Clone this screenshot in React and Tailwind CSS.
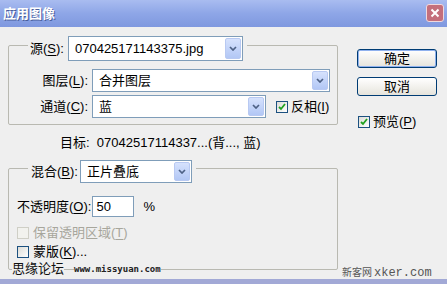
import React from "react";

const ui = "font-['Liberation_Sans','Noto_Sans_CJK_SC',sans-serif]";

function DropArrow() {
  return (
    <span className="flex h-full w-[16px] shrink-0 items-center justify-center rounded-[2px] border border-[#b8c9f2] bg-gradient-to-b from-[#d6e2fd] to-[#b2c7f5]">
      <svg width="8" height="5" viewBox="0 0 8 5">
        <path d="M1 1l3 3 3-3" stroke="#4d6185" strokeWidth="1.7" fill="none" />
      </svg>
    </span>
  );
}

function Select({ value, className }) {
  return (
    <div className={`flex items-stretch border border-[#7f9db9] bg-white p-[1px] ${className}`}>
      <span className="flex flex-1 items-center pl-[5px] text-[13px] text-black">{value}</span>
      <DropArrow />
    </div>
  );
}

function Check({ checked, disabled }) {
  return (
    <span
      className={`flex h-[12px] w-[12px] shrink-0 items-center justify-center border ${
        disabled ? "border-[#cfcfc6] bg-[#f2f2ee]" : "border-[#1c5180] bg-gradient-to-br from-[#dcdcd7] to-white"
      }`}
    >
      {checked && (
        <svg width="8" height="8" viewBox="0 0 8 8">
          <path d="M1 4l2 2 4-5" stroke="#21a121" strokeWidth="1.8" fill="none" />
        </svg>
      )}
    </span>
  );
}

function Key({ k }) {
  return <span className="underline underline-offset-2">{k}</span>;
}

function Button({ children, primary }) {
  return (
    <div
      className={`flex h-[19px] w-[80px] items-center justify-center rounded-[3px] border border-[#003c74] bg-gradient-to-b from-white to-[#e6e4dc] text-[13px] text-black ${
        primary ? "shadow-[inset_0_0_0_1px_#8fb1ee]" : ""
      }`}
    >
      {children}
    </div>
  );
}

export default function App() {
  return (
    <div className={`flex h-[284px] w-[447px] flex-col overflow-hidden bg-[#efefef] ${ui}`}>
      <div className="flex h-[27px] shrink-0 items-center justify-between bg-gradient-to-b from-[#a9bcf0] via-[#8ea6e7] to-[#7f98df] pl-[3px] pr-[3px]">
        <span className="text-[13px] font-bold text-white [text-shadow:1px_1px_0_#4a5f9c]">应用图像</span>
        <span className="mb-[2px] flex h-[18px] w-[18px] items-center justify-center rounded-[3px] border border-[#f0d8dc] bg-[#c46f7c]">
          <svg width="10" height="10" viewBox="0 0 10 10">
            <path d="M1.5 1.5l7 7M8.5 1.5l-7 7" stroke="white" strokeWidth="2" />
          </svg>
        </span>
      </div>

      <div className="relative flex flex-1 pl-[8px]">
        <div className="flex w-[330px] flex-col">
          <div className="mt-[18px] h-[80px] rounded-[2px] border border-[#b9b9b1]">
            <div className="-mt-[10px] ml-[19px] flex w-fit items-center bg-[#efefef] pl-[2px] pr-[4px]">
              <span className="text-[13px]">源(<Key k="S" />):</span>
              <Select value="070425171143375.jpg" className="ml-[4px] h-[25px] w-[175px]" />
            </div>
            <div className="mt-[8px] flex items-center">
              <span className="w-[79px] text-right text-[13px]">图层(<Key k="L" />):</span>
              <Select value="合并图层" className="ml-[4px] h-[23px] w-[238px]" />
            </div>
            <div className="mt-[3px] flex items-center">
              <span className="w-[79px] text-right text-[13px]">通道(<Key k="C" />):</span>
              <Select value="蓝" className="ml-[4px] h-[23px] w-[174px]" />
              <span className="ml-[10px]"><Check checked /></span>
              <span className="ml-[3px] text-[13px]">反相(<Key k="I" />)</span>
            </div>
          </div>

          <div className="mt-[10px] pl-[52px] text-[13px] leading-[16px]">
            目标:&nbsp; 07042517114337...(背..., 蓝)
          </div>

          <div className="mt-[17px] h-[102px] rounded-[2px] border border-[#b9b9b1]">
            <div className="-mt-[9px] ml-[19px] flex w-fit items-center bg-[#efefef] pl-[3px] pr-[4px]">
              <span className="text-[13px]">混合(<Key k="B" />):</span>
              <Select value="正片叠底" className="ml-[2px] h-[23px] w-[112px]" />
            </div>
            <div className="mt-[13px] flex items-center pl-[8px]">
              <span className="text-[13px]">不透明度(<Key k="O" />):</span>
              <div className="ml-[1px] flex h-[21px] w-[42px] items-center border border-[#7f9db9] bg-white pl-[3px] text-[13px]">
                50
              </div>
              <span className="ml-[9px] text-[13px]">%</span>
            </div>
            <div className="mt-[10px] flex h-[12px] items-center pl-[8px]">
              <Check disabled />
              <span className="ml-[4px] text-[13px] text-[#a7a69c]">保留透明区域(<Key k="T" />)</span>
            </div>
            <div className="mt-[7px] flex h-[12px] items-center pl-[8px]">
              <Check />
              <span className="ml-[4px] text-[13px]">蒙版(<Key k="K" />)...</span>
            </div>
          </div>
        </div>

        <div className="ml-[19px] mt-[22px] flex flex-col">
          <Button primary>确定</Button>
          <div className="mt-[9px]">
            <Button>取消</Button>
          </div>
          <div className="ml-[1px] mt-[16px] flex items-center">
            <Check checked />
            <span className="ml-[3px] text-[13px]">预览(<Key k="P" />)</span>
          </div>
        </div>

        <div className="absolute left-[12px] top-[234px] flex items-center">
          <span className="bg-[#efefef] text-[13px] leading-[15px] text-[#111]">思缘论坛</span>
          <span className="ml-[10px] bg-[#efefef] font-['DejaVu_Sans_Mono',monospace] text-[9px] font-bold leading-[10px] text-[#222]">
            www.missyuan.com
          </span>
        </div>
        <div className="absolute left-[342px] top-[237px] flex items-baseline text-[#555]">
          <span className="text-[10px]">新客网</span>
          <span className="ml-[2px] font-['Liberation_Mono',monospace] text-[12px]">xker.com</span>
        </div>
      </div>

      <div className="h-[5px] shrink-0 bg-[#a2a9d6]" />
    </div>
  );
}
